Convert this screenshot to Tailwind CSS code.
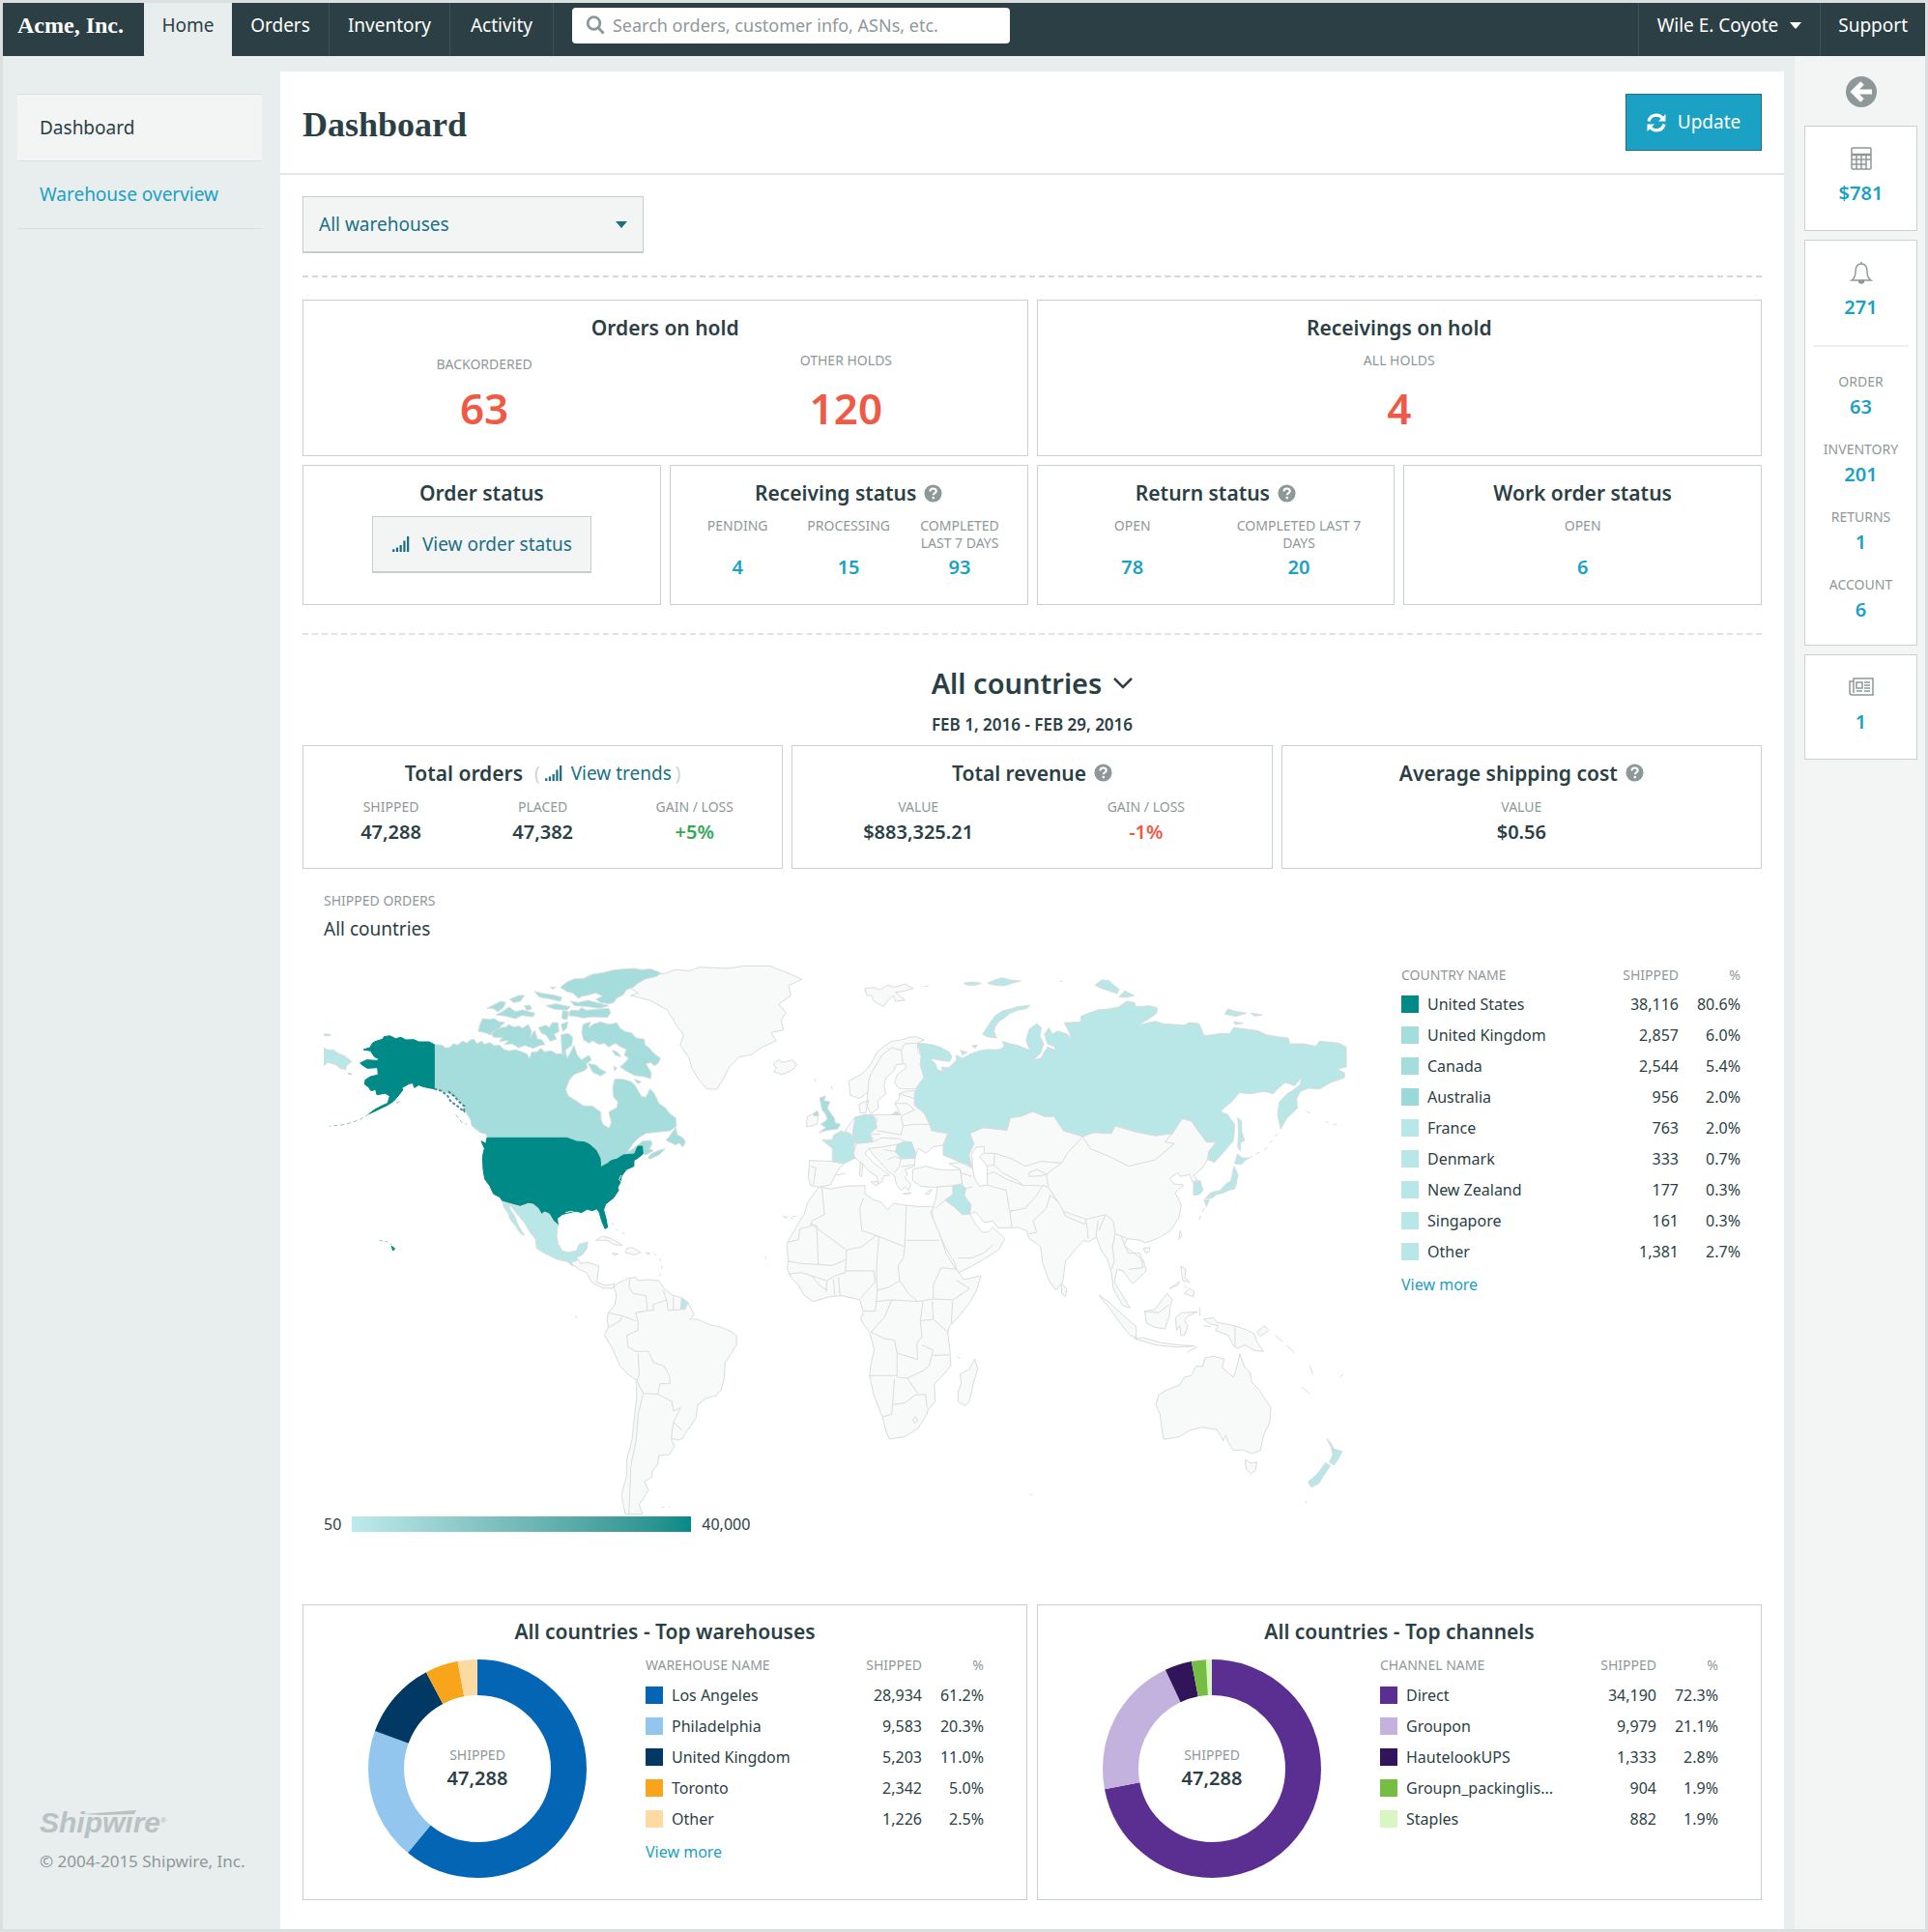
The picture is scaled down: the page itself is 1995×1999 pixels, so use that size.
<!DOCTYPE html>
<html lang="en">
<head>
    <meta charset="UTF-8">
    <meta name="viewport" content="width=device-width, initial-scale=1.0">
    <title>Dashboard - Acme, Inc.</title>
    <script src="https://cdn.jsdelivr.net/npm/@tailwindcss/browser@4"></script>
</head>
<body class="min-h-screen flex flex-col border-[3px] border-[#dcdfdf] bg-[#e8eded] font-['Noto_Sans','Open_Sans',sans-serif] text-[19px] text-[#2b3f45]">
    <!-- shared icons -->
    <svg class="hidden">
        <symbol id="help" viewBox="0 0 20 20">
            <circle cx="10" cy="10" r="9.5" fill="#8f9899"/>
            <path d="M6.8 7.8C6.8 5.8 8.2 4.7 10.1 4.7S13.4 5.8 13.4 7.5C13.4 9.7 10.3 9.7 10.3 11.9" fill="none" stroke="#fff" stroke-width="2.2"/>
            <circle cx="10.3" cy="14.8" r="1.4" fill="#fff"/>
        </symbol>
        <symbol id="bars" viewBox="0 0 20 18">
            <path d="M0 15h2.5v3H0zM4.2 13h2.5v5H4.2zM8.4 10h2.5v8H8.4zM12.6 5h2.5v13h-2.5zM16.8 0h2.5v18h-2.5z" fill="currentColor"/>
        </symbol>
    </svg>

    <header class="flex bg-[#2b3f45] text-white">
        <a href="#" class="flex items-center h-[55px] pb-[9px] pl-[15px] pr-[21px] font-['Liberation_Serif',serif] font-bold text-2xl">Acme, Inc.</a>
        <nav class="flex">
            <a href="#" class="flex items-center justify-center w-[91px] pb-[9px] bg-[#e8eded] text-[#2b3f45]">Home</a>
            <a href="#" class="flex items-center justify-center w-[101px] pb-[9px] border-r border-[#3d5157]">Orders</a>
            <a href="#" class="flex items-center justify-center w-[125px] pb-[9px] border-r border-[#3d5157]">Inventory</a>
            <a href="#" class="flex items-center justify-center w-[107px] pb-[9px] border-r border-[#3d5157]">Activity</a>
        </nav>
        <form class="flex items-center pb-[9px] ml-[19px]">
            <div class="flex items-center w-[453px] h-[37px] px-[14px] gap-2 rounded-sm bg-white">
                <svg class="w-5 h-5 shrink-0" viewBox="0 0 20 20" fill="none" stroke="#8f9899" stroke-width="2.8"><circle cx="8.5" cy="8" r="6.3"/><path d="M13 12.5l5.5 6"/></svg>
                <input type="text" aria-label="Search" placeholder="Search orders, customer info, ASNs, etc." class="flex-1 min-w-0 outline-none text-lg text-[#2b3f45] placeholder:text-[#8f9899]">
            </div>
        </form>
        <div class="flex ml-auto">
            <button class="flex items-center gap-3 px-[19px] pb-[9px] border-l border-[#3d5157]">Wile E. Coyote
                <svg class="w-3 h-2" viewBox="0 0 12 8"><path d="M0 1h12L7 7Q6 8 5 7z" fill="#fff"/></svg>
            </button>
            <a href="#" class="flex items-center px-[18px] pb-[9px] border-l border-[#3d5157]">Support</a>
        </div>
    </header>

    <div class="flex flex-1">
        <aside class="flex flex-col w-[287px] shrink-0 pt-[39px]">
            <nav class="ml-[15px] mr-[19px]">
                <a href="#" class="flex items-center h-[70px] pl-[23px] border-y border-[#dadfdf] bg-[#f3f5f4]">Dashboard</a>
                <a href="#" class="flex items-center h-[70px] pl-[23px] border-b border-[#dadfdf] text-[#1ba1c4]">Warehouse overview</a>
            </nav>
            <div class="mt-auto pl-[38px] pb-[58px]">
                <div class="relative flex w-fit font-['Liberation_Sans',sans-serif] text-[30px] leading-8 font-bold italic text-[#b9c2c2]">
                    Shipwire<span class="text-[8px] leading-7">®</span>
                    <svg class="absolute left-11 top-[3px] w-14 h-2" viewBox="0 0 56 8"><path d="M0 4L56 0L54 4L20 5z" fill="#b9c2c2"/></svg>
                </div>
                <p class="mt-3 text-[17px] leading-6 text-[#8f9899]">© 2004-2015 Shipwire, Inc.</p>
            </div>
        </aside>

        <main class="flex-1 min-w-0 mt-4 mr-[11px] bg-white">
            <div class="flex items-center justify-between h-[107px] px-[23px] border-b-2 border-[#e1e6e6]">
                <h1 class="pt-1 font-['Liberation_Serif',serif] font-bold text-4xl">Dashboard</h1>
                <button class="flex items-center justify-center gap-3 w-[141px] h-[59px] border border-[#1a6f87] bg-[#1ba1c4] text-white">
                    <svg class="w-5 h-5" viewBox="0 0 20 20" fill="none" stroke="#fff" stroke-width="3.2"><path d="M2 8.500C3 4.500 6 2.200 10 2.200c2.500 0 4.500 1 6 2.800M18 11.500c-1 4-4 6.300-8 6.300-2.500 0-4.500-1-6-2.800"/><path d="M19.500 1v7.500H12zM.5 19v-7.500H8z" fill="#fff" stroke="none"/></svg>
                    Update
                </button>
            </div>

            <div class="px-[23px] pt-[22px] pb-[29px]">
                <div class="relative w-[353px]">
                    <select aria-label="Warehouse" class="block appearance-none w-full h-[59px] pl-4 border border-[#c6cdcd] border-b-2 bg-[#f3f5f4] text-[#1a6f87]">
                        <option>All warehouses</option>
                    </select>
                    <svg class="absolute right-4 top-1/2 -mt-1 w-[14px] h-2 pointer-events-none" viewBox="0 0 14 8"><path d="M1 0h12L7 7z" fill="#1a6f87"/></svg>
                </div>

                <hr class="mt-[23px] border-t-2 border-dashed border-[#d3d8d8]">

                <section class="mt-[23px] grid grid-cols-2 gap-[9px] text-center">
                    <div class="min-h-[162px] pt-[14px] border border-[#c9d0d0]">
                        <h2 class="text-[21px] leading-7 font-semibold">Orders on hold</h2>
                        <div class="grid grid-cols-2 mt-[11px]">
                            <div class="pt-1">
                                <div class="text-sm leading-[18px] text-[#8f9899]">BACKORDERED</div>
                                <div class="mt-3 text-[44px] leading-[48px] font-semibold text-[#ee5a45]">63</div>
                            </div>
                            <div>
                                <div class="text-sm leading-[18px] text-[#8f9899]">OTHER HOLDS</div>
                                <div class="mt-4 text-[44px] leading-[48px] font-semibold text-[#ee5a45]">120</div>
                            </div>
                        </div>
                    </div>
                    <div class="min-h-[162px] pt-[14px] border border-[#c9d0d0]">
                        <h2 class="text-[21px] leading-7 font-semibold">Receivings on hold</h2>
                        <div class="mt-[11px] text-sm leading-[18px] text-[#8f9899]">ALL HOLDS</div>
                        <div class="mt-4 text-[44px] leading-[48px] font-semibold text-[#ee5a45]">4</div>
                    </div>
                </section>

                <section class="mt-[9px] grid grid-cols-4 gap-[9px] text-center">
                    <div class="min-h-[145px] pt-[14px] border border-[#c9d0d0]">
                        <h2 class="text-[21px] leading-7 font-semibold">Order status</h2>
                        <button class="inline-flex items-center justify-center gap-3 mt-[10px] w-[227px] h-[59px] border border-[#c6cdcd] border-b-2 bg-[#f3f5f4] text-[#1a6f87]">
                            <svg class="w-5 h-4"><use href="#bars"/></svg>View order status
                        </button>
                    </div>
                    <div class="min-h-[145px] pt-[14px] px-3 border border-[#c9d0d0]">
                        <h2 class="flex items-center justify-center gap-2 text-[21px] leading-7 font-semibold">Receiving status <svg class="w-[19px] h-[19px]"><use href="#help"/></svg></h2>
                        <div class="grid grid-cols-3 mt-[11px]">
                            <div><div class="h-9 text-sm leading-[18px] text-[#8f9899]">PENDING</div><a href="#" class="block mt-[2px] text-xl leading-7 font-semibold text-[#1ba1c4]">4</a></div>
                            <div><div class="h-9 text-sm leading-[18px] text-[#8f9899]">PROCESSING</div><a href="#" class="block mt-[2px] text-xl leading-7 font-semibold text-[#1ba1c4]">15</a></div>
                            <div><div class="h-9 text-sm leading-[18px] text-[#8f9899]">COMPLETED LAST 7 DAYS</div><a href="#" class="block mt-[2px] text-xl leading-7 font-semibold text-[#1ba1c4]">93</a></div>
                        </div>
                    </div>
                    <div class="min-h-[145px] pt-[14px] px-3 border border-[#c9d0d0]">
                        <h2 class="flex items-center justify-center gap-2 text-[21px] leading-7 font-semibold">Return status <svg class="w-[19px] h-[19px]"><use href="#help"/></svg></h2>
                        <div class="grid grid-cols-2 mt-[11px]">
                            <div><div class="h-9 text-sm leading-[18px] text-[#8f9899]">OPEN</div><a href="#" class="block mt-[2px] text-xl leading-7 font-semibold text-[#1ba1c4]">78</a></div>
                            <div><div class="h-9 px-4 text-sm leading-[18px] text-[#8f9899]">COMPLETED LAST 7 DAYS</div><a href="#" class="block mt-[2px] text-xl leading-7 font-semibold text-[#1ba1c4]">20</a></div>
                        </div>
                    </div>
                    <div class="min-h-[145px] pt-[14px] px-3 border border-[#c9d0d0]">
                        <h2 class="text-[21px] leading-7 font-semibold">Work order status</h2>
                        <div class="mt-[11px] h-9 text-sm leading-[18px] text-[#8f9899]">OPEN</div>
                        <a href="#" class="block mt-[2px] text-xl leading-7 font-semibold text-[#1ba1c4]">6</a>
                    </div>
                </section>

                <hr class="mt-[29px] border-t-2 border-dashed border-[#dfe3e3]">

                <div class="mt-8 text-center">
                    <button class="inline-flex items-center gap-3 text-[29px] leading-9 font-semibold">All countries
                        <svg class="w-5 h-3" viewBox="0 0 20 12" fill="none" stroke="#2b3f45" stroke-width="2.5"><path d="M1 1l9 9 9-9"/></svg>
                    </button>
                    <p class="mt-3 text-[17px] leading-6 font-semibold">FEB 1, 2016 - FEB 29, 2016</p>
                </div>

                <section class="mt-[9px] grid grid-cols-3 gap-[9px] text-center">
                    <div class="min-h-[128px] pt-[14px] px-3 border border-[#c9d0d0]">
                        <div class="flex items-center justify-center">
                            <h2 class="text-[21px] leading-7 font-semibold">Total orders</h2>
                            <span class="ml-3 leading-7 text-[#ccd3d3]">(</span>
                            <a href="#" class="flex items-center gap-2 mx-1 leading-7 text-[#1a6f87]"><svg class="w-5 h-4"><use href="#bars"/></svg>View trends</a>
                            <span class="leading-7 text-[#ccd3d3]">)</span>
                        </div>
                        <div class="grid grid-cols-3 mt-3">
                            <div><div class="text-sm leading-[18px] text-[#8f9899]">SHIPPED</div><div class="mt-[3px] text-xl leading-7 font-semibold">47,288</div></div>
                            <div><div class="text-sm leading-[18px] text-[#8f9899]">PLACED</div><div class="mt-[3px] text-xl leading-7 font-semibold">47,382</div></div>
                            <div><div class="text-sm leading-[18px] text-[#8f9899]">GAIN / LOSS</div><div class="mt-[3px] text-xl leading-7 font-semibold text-[#35a853]">+5%</div></div>
                        </div>
                    </div>
                    <div class="min-h-[128px] pt-[14px] px-3 border border-[#c9d0d0]">
                        <h2 class="flex items-center justify-center gap-2 text-[21px] leading-7 font-semibold">Total revenue <svg class="w-[19px] h-[19px]"><use href="#help"/></svg></h2>
                        <div class="grid grid-cols-2 mt-3">
                            <div><div class="text-sm leading-[18px] text-[#8f9899]">VALUE</div><div class="mt-[3px] text-xl leading-7 font-semibold">$883,325.21</div></div>
                            <div><div class="text-sm leading-[18px] text-[#8f9899]">GAIN / LOSS</div><div class="mt-[3px] text-xl leading-7 font-semibold text-[#ee5a45]">-1%</div></div>
                        </div>
                    </div>
                    <div class="min-h-[128px] pt-[14px] px-3 border border-[#c9d0d0]">
                        <h2 class="flex items-center justify-center gap-2 text-[21px] leading-7 font-semibold">Average shipping cost <svg class="w-[19px] h-[19px]"><use href="#help"/></svg></h2>
                        <div class="mt-3 text-sm leading-[18px] text-[#8f9899]">VALUE</div>
                        <div class="mt-[3px] text-xl leading-7 font-semibold">$0.56</div>
                    </div>
                </section>

                <section class="mt-6 px-[22px]">
                    <div class="text-sm leading-[18px] text-[#8f9899]">SHIPPED ORDERS</div>
                    <h3 class="mt-2 leading-6">All countries</h3>
                    <div class="flex items-start gap-14 mt-[22px]">
                        <svg class="flex-1 min-w-0 [&_path]:[vector-effect:non-scaling-stroke]" viewBox="335 995 1059 574" stroke-width="1" stroke-linejoin="round" stroke="#d9dcdc" fill="#f8f9f9">
                            <!-- Greenland -->
                            <path transform="scale(1.2748)" d="M508 800L514 796 522 795 530 791 540 790 548 787 560 788 568 785 590 786 604 784 625 784 640 790 651 795 640 800 642 808 632 815 638 822 634 828 636 836 626 838 630 845 618 850 610 856 600 858 592 866 588 874 582 884 574 884 567 876 562 868 559 858 552 848 555 840 549 832 542 820 528 812 512 808 518 806Z"/>

                            <!-- North America -->
                            <g transform="translate(320 980) scale(.3333)">
                                <g fill="#a5dcdc">
                                    <path d="M388 302L412 304 422 312 435 312 448 300 460 304 476 292 490 298 500 288 512 286 520 300 534 292 545 302 560 296 575 306 590 304 605 318 620 322 640 318 660 325 676 332 684 346 690 326 705 326 720 314 730 325 752 322 768 332 790 330 795 318 800 345 812 325 822 305 832 335 845 350 868 336 876 350 860 362 864 375 850 385 822 395 808 412 796 442 804 462 830 478 850 492 880 494 905 512 906 535 912 550 930 562 938 545 930 512 955 498 958 480 945 465 942 440 948 410 975 410 1000 418 1012 430 1030 462 1045 466 1058 440 1072 455 1085 485 1105 498 1118 516 1138 530 1140 556 1120 570 1080 574 1045 578 1025 590 1005 610 985 640 1010 622 1035 602 1060 600 1065 610 1056 626 1068 632 1045 645 1036 640 1030 618 1018 618 1020 640 975 648 938 665 905 683 903 655 890 630 870 610 855 605 830 603 800 592 552 592 548 580 530 575 505 555 500 535 488 515 478 490 455 468 436 455 410 446 388 440Z"/>
                                    <path d="M1108 600L1120 585 1138 560 1142 582 1160 592 1168 605 1160 620 1148 608 1138 614ZM1052 652L1065 640 1082 632 1105 626 1085 645 1058 658Z"/>
                                    <path d="M525 262L530 240 538 222 560 224 575 222 590 232 608 234 595 244 585 258 570 262 562 272 545 265Z"/>
                                    <path d="M565 268L590 250 612 248 618 240 635 248 650 245 662 252 680 240 690 262 686 280 700 258 708 285 722 288 732 302 715 305 695 314 670 305 650 312 630 300 605 302 620 290 590 292 600 280 572 280Z"/>
                                    <path d="M852 288L846 265 850 240 872 232 868 252 880 240 905 232 930 240 955 235 965 252 980 262 1000 266 1015 282 1040 286 1042 302 1060 318 1070 330 1090 345 1085 358 1072 368 1060 358 1045 362 1062 390 1060 408 1040 402 1010 398 985 385 965 372 980 358 992 345 978 335 985 318 965 308 950 298 930 310 915 298 900 302 880 290 868 298Z"/>
                                    <path d="M780 125L800 108 825 98 850 98 880 84 910 80 940 72 975 68 1010 66 1030 70 1060 68 1092 80 1075 92 1045 98 1020 112 1005 125 985 132 975 148 955 158 945 172 930 176 905 172 890 162 910 152 890 142 870 148 850 152 835 158 818 142 800 138Z"/>
                                    <path d="M805 212L812 195 835 198 845 188 860 196 930 190 935 205 925 218 880 216 850 220 830 215ZM810 168L835 172 865 165 930 182 900 190 860 184 825 182Z"/>
                                    <path d="M552 190L575 178 595 168 610 172 602 188 585 200 570 190ZM580 210L600 200 620 186 640 200 662 195 700 205 695 216 660 212 640 222 610 214ZM622 162L650 150 668 150 655 168 635 172ZM700 138L730 145 755 148 785 156 778 168 745 160 715 155ZM735 182L765 176 810 185 800 196 760 192ZM786 198L805 200 800 225 785 222ZM668 182L685 180 690 192 675 196ZM750 124L765 125 755 130Z"/>
                                    <path d="M712 250L735 242 745 250 755 234 772 235 775 262 760 270 768 285 748 292 735 272 722 268ZM782 240L802 232 800 250 788 262ZM782 272L805 268 818 280 815 305 800 315 785 335ZM866 362L890 366 902 378 922 388 905 400 880 388ZM940 320L955 325 968 340 950 335ZM1010 410L1030 418 1020 424ZM945 370L955 375 948 384Z"/>
                                </g>
                                <path fill="#008a87" stroke="#008a87" d="M168 318L188 312 198 296 212 290 228 286 232 278 250 275 268 284 285 280 300 288 325 287 340 294 372 294 388 302 388 440 365 436 350 432 340 428 326 436 322 422 310 424 300 430 288 436 290 444 276 462 262 478 244 490 215 504 185 518 200 506 222 494 244 484 250 462 236 454 210 458 206 442 192 446 184 434 172 426 174 412 190 402 214 396 212 374 180 376 168 368 158 360 178 350 210 352 218 348 202 340 190 322Z"/>
                                <path fill="none" stroke="#3d8f93" stroke-dasharray="3 2" stroke-width="2" d="M388 440L410 446 430 462 440 480 456 490 470 502 484 512M432 448L450 462 465 480 482 494 480 512"/>
                                <path fill="none" stroke="#8fc2c2" stroke-dasharray="4 3" d="M185 518L160 534 130 545 100 552 62 556M270 484L288 476M455 520L475 545 490 550M120 392L140 396"/>
                                <path fill="#008a87" stroke="#008a87" d="M552 592L800 592 830 603 855 605 870 612 890 630 903 655 905 683 925 672 938 662 955 658 975 645 1010 642 1020 618 1034 618 1036 642 1020 655 1008 662 1008 680 985 690 970 710 966 730 958 745 960 755 945 778 920 798 914 815 922 845 926 870 918 874 908 850 900 822 892 812 880 818 862 814 845 824 830 820 800 826 785 830 770 842 772 862 758 850 745 828 730 822 722 830 710 810 695 798 680 796 655 805 600 788 592 776 572 766 560 740 545 720 540 690 538 650 544 625 534 602 548 610ZM255 928L266 936 260 942Z"/>
                                <path fill="none" stroke="#f8f9f9" d="M968 708L962 722 970 730M796 824L812 820 832 826"/>
                                <path fill="none" stroke="#8fc2c2" stroke-dasharray="3 3" d="M218 910L240 914 256 924"/>
                                <path fill="#b9e6e6" d="M600 790L655 805 680 796 695 798 710 810 722 830 730 822 745 828 758 850 772 862 768 895 772 920 785 942 805 948 830 942 838 922 865 915 862 935 848 955 832 962 832 975 818 990 800 976 770 970 730 950 706 935 702 905 685 885 668 855 645 828 622 798 622 812 638 835 648 862 668 895 655 888 640 865 622 842 618 826 604 808ZM45 312L60 320 75 318 90 330 110 338 132 355 118 366 112 380 95 376 85 366 58 358 45 368ZM45 270L65 270 65 275 45 275Z"/>
                            </g>

                            <!-- Europe and Asia -->
                            <g transform="matrix(.3954 0 0 .3333 800 980)">
                                <path d="M0 362L15 350 25 358 50 350 62 366 50 382 25 395 2 388 8 376ZM240 128L265 125 280 132 300 118 318 124 345 115 367 128 345 136 320 140 330 150 345 165 320 168 315 150 300 165 290 185 278 178 262 165 258 150 245 150Z"/>
                                <path d="M198 415L230 395 250 372 262 350 272 325 290 308 310 292 335 288 355 280 375 278 395 288 378 298 378 320 388 340 385 365 395 405 375 440 330 440 318 420 325 395 348 375 345 362 322 365 315 385 295 405 290 430 295 455 275 475 275 500 255 517 245 490 248 450 225 470 202 460ZM225 488L250 475 242 515 228 515ZM88 540L90 525 104 518 118 528 115 550 88 558Z"/>
                                <path fill="none" d="M248 450L250 410 262 380 285 335 310 312 335 320 345 300 378 298M335 320L340 362"/>
                                <path d="M318 485L330 470 330 455 345 448 370 445 370 490 395 515 410 550 415 570 458 578 445 615 418 620 400 640 380 625 372 650 370 680 345 690 352 705 345 715 360 735 355 755 345 745 335 755 322 735 318 710 300 695 280 668 262 645 250 625 240 640 262 668 285 690 305 708 290 710 285 728 275 735 272 712 250 695 232 670 215 655 210 640 218 610 208 585 188 570 200 550 212 530 240 520 310 520 333 520 325 500Z"/>
                                <path fill="none" d="M272 530L268 560M335 525L340 555 335 582 300 575 272 570M318 485L350 485 370 505 335 525M340 555L370 550 410 550M260 605L285 592 330 595 345 603M262 600L255 580 280 580M250 625L290 620 325 612M320 635L290 628M300 660L318 650 335 657 330 680 318 700M335 682L370 675M330 455L370 470M188 570L208 585"/>
                                <path d="M95 662L155 665 185 672 168 695 160 715 150 738 120 745 98 740 92 715ZM228 668L234 675 232 712 226 708ZM255 728L276 728 270 742ZM340 765L362 762 350 768ZM398 768L405 758 416 752 410 765Z"/>
                                <path fill="none" d="M98 680L112 685 105 738M165 708L190 702"/>
                                <path d="M365 690L400 680 430 690 465 692 490 690 495 735 470 742 430 745 410 745 385 742 365 725Z"/>
                                <path d="M515 578L550 560 612 568 620 530 680 510 710 525 735 525 760 570 810 588 840 575 885 578 895 555 945 572 1000 585 1045 578 1070 532 1095 540 1115 575 1135 605 1160 605 1140 635 1136 662 1120 690 1100 708 1110 722 1098 730 1090 706 1065 712 1060 700 1038 718 1048 735 1074 738 1052 762 1068 800 1062 840 1040 880 1010 902 975 918 960 910 927 905 918 925 945 950 968 970 977 1005 941 1045 930 1028 915 1005 900 1000 893 1040 914 1080 934 1120 914 1112 890 1060 885 1010 875 970 860 945 846 900 825 915 812 910 790 940 765 975 758 1040 740 1065 722 1035 705 980 700 930 690 920 670 905 663 880 640 870 588 872 575 850 552 855 530 822 515 828 530 860 548 885 562 885 575 870 607 905 590 940 550 970 520 990 483 1012 475 980 450 930 420 850 415 815 425 785 430 745 470 740 495 735 490 690 460 672 490 668 520 685 512 645 525 610Z"/>
                                <path fill="#fff" d="M520 640L530 622 552 618 552 640 540 650 560 680 560 710 560 738 540 742 528 720 522 690Z"/>
                                <path fill="none" d="M552 640L580 640 578 675 560 680M580 640L620 655 660 680 700 665 755 670 770 640 810 588M578 675L600 700 640 725 655 740 700 740M755 670L715 705 720 745M560 705L578 698 610 720 655 740M670 712L700 710 715 705 690 690 670 700ZM560 738L610 755 620 825 625 870M500 750L520 745M810 588L830 625 880 650 930 680 1000 660 1050 610 1025 605 1045 578M620 820L660 810 690 770 705 740 720 745 745 790 760 820 820 845 870 830 890 850 895 890 927 905M745 790L725 770 715 810 680 850 690 885 670 890M760 820L765 835 815 860 820 845M820 855L825 905M850 850L845 900M870 830L852 880M895 890L888 930 893 975 885 1000M910 898L930 950 960 950 968 995 930 1000M515 828L500 830 450 785 425 810M483 965L520 965 550 950 575 925M490 700L520 712"/>
                                <g fill="#b9e6e6">
                                    <path d="M378 298L400 300 420 304 440 312 460 325 468 340 462 355 440 352 410 345 425 362 430 380 445 386 440 372 460 374 480 350 478 335 495 345 520 330 540 322 560 318 590 318 605 310 600 292 620 300 640 305 672 320 662 290 670 255 690 238 702 250 698 275 708 300 700 330 680 350 700 345 718 310 740 320 735 308 718 300 710 270 722 250 730 270 745 260 770 270 782 290 775 265 762 235 805 232 805 215 825 205 850 195 880 192 905 185 925 168 945 172 950 185 985 182 1005 188 1004 205 980 225 955 242 1000 230 1020 238 1050 240 1075 242 1090 234 1115 238 1128 275 1150 272 1170 268 1195 268 1205 250 1240 255 1270 260 1290 272 1320 278 1348 282 1352 300 1390 300 1420 308 1430 292 1480 298 1500 310 1500 372 1475 378 1495 390 1495 405 1460 420 1430 440 1400 438 1380 448 1370 470 1372 500 1345 530 1328 565 1320 520 1325 480 1345 455 1360 445 1380 425 1382 405 1365 430 1340 420 1320 440 1308 455 1285 448 1250 455 1220 452 1200 480 1170 510 1190 520 1195 530 1208 550 1205 600 1180 635 1155 668 1138 660 1140 635 1160 605 1135 605 1115 575 1095 540 1070 532 1055 560 1045 578 1000 585 945 572 920 562 895 555 885 578 840 575 810 588 780 575 760 570 735 525 710 525 680 510 650 525 620 530 612 568 550 560 515 578 525 610 512 645 520 685 505 672 490 668 445 645 445 615 458 578 415 570 410 550 395 515 370 490 370 455 378 430 395 405 385 365 388 340Z"/>
                                    <path d="M548 270L562 245 570 230 582 212 600 198 620 192 640 185 672 180 665 190 640 196 620 205 605 220 590 232 580 250 578 262 585 282 560 278ZM498 112L520 108 545 112 530 118 510 118ZM560 112L580 102 600 95 620 102 648 105 625 112 605 120 580 118ZM842 118L860 102 880 104 888 115 905 130 900 145 880 136 860 128ZM905 155L920 136 945 150 925 156ZM1182 208L1190 192 1205 198 1238 205 1210 215ZM1250 205L1280 210 1260 214ZM1205 232L1230 236 1210 240ZM490 320L508 326 496 335ZM520 306L535 304 528 314Z"/>
                                    <path d="M1216 530L1226 540 1226 570 1234 600 1224 605 1222 632 1216 620 1218 580ZM310 520L322 510 333 520ZM1215 642L1228 654 1245 655 1235 662 1225 675 1208 672ZM1206 680L1216 705 1212 735 1208 750 1190 756 1180 762 1160 768 1150 778 1130 780 1145 762 1170 755 1180 740 1198 725ZM1128 785L1142 782 1134 806ZM1100 728L1118 725 1125 755 1115 768 1100 770Z"/>
                                    <path d="M470 740L495 738 505 750 500 770 518 800 515 828 495 830 470 802 450 785 470 768ZM128 598L155 598 158 584 178 570 198 580 215 588 210 640 215 655 185 672 155 665 155 625 140 610ZM215 528L240 520 265 525 272 560 252 580 260 605 218 610 208 585 210 560ZM325 612L345 603 362 605 372 635 372 655 335 657 320 635Z"/>
                                </g>
                                <path fill="#a5dcdc" d="M122 468L138 462 132 476 148 480 142 500 152 518 160 530 162 545 176 550 168 565 145 568 120 575 138 560 125 550 142 535 138 520 128 505ZM104 518L115 508 120 522 108 524Z"/>
                                <path fill="none" stroke-dasharray="4 5" d="M1245 655L1290 625 1325 570M1395 510L1410 518M1445 540L1455 548 1490 555M1128 810L1110 860M28 840L60 835M108 408L112 418M152 432L155 442M396 122L410 120M750 105L758 107"/>
                            </g>

                            <!-- South America, Africa, Oceania -->
                            <g transform="matrix(.5357 0 0 .3333 580 1250)">
                                <path d="M145 215L150 225 172 222 190 225 200 250 215 270 234 278 246 292 258 330 250 345 265 345 288 362 310 370 328 382 340 395 340 425 328 455 318 480 316 530 310 565 300 582 282 590 265 610 262 650 250 680 240 700 236 715 228 720 214 715 220 740 210 765 190 768 188 795 178 815 176 835 162 850 170 875 160 900 152 920 158 950 125 950 118 890 128 830 128 780 138 720 142 660 147 590 147 535 130 515 115 490 100 435 85 395 92 370 90 345 92 325 105 300 108 270 103 245 112 232 130 218Z"/>
                                <path fill="none" d="M135 215L132 245 140 265 165 272 168 318 145 325 150 355 150 380 128 395 130 430 145 445 170 445 180 480 200 490 210 520 212 545 192 545 188 578 215 600 218 630 232 620 218 665 235 690M168 318L180 318 178 300 205 285 198 255M205 285L208 318 234 315M218 275L218 318M150 450L152 520 147 535 160 575 188 578M160 575L150 640 146 720 136 800 132 950M92 372L115 350 120 335 92 325M120 335L145 350M218 665L214 715"/>
                                <path fill="#b9e6e6" d="M234 278L246 294 240 315 232 312Z"/>
                                <path d="M20 170L35 160 38 172 50 168 74 180 70 230 85 240 105 235 100 250 80 248 60 230 50 200 35 190ZM68 100L80 88 95 92 120 115 104 114 90 100ZM128 125L138 122 155 138 142 145 125 138ZM100 140L112 142 104 146ZM165 138L173 140 168 144Z"/>
                                <path fill="none" stroke-dasharray="3 5" d="M180 142L192 155 196 185 190 220M98 45L110 70 124 80M28 335L38 345M395 150L402 175M430 25L455 35M195 928L212 928M908 885L914 900"/>
                                <path d="M499 -65L521 -60 550 -68 588 -70 588 -45 605 -25 618 -20 632 5 643 -15 660 -10 690 -5 721 -5 715 15 732 80 745 140 762 185 772 205 778 222 812 210 805 250 792 290 770 335 752 365 748 385 752 440 754 490 735 525 722 545 724 600 710 625 708 640 690 685 665 710 635 717 628 690 622 650 605 580 597 520 600 480 606 440 597 385 585 360 580 345 585 320 578 285 545 272 520 275 488 290 470 270 460 240 445 215 438 190 440 165 437 110 455 60 470 20 478 -20Z"/>
                                <path fill="none" d="M440 105L460 98 462 65 485 55 485 40 510 20 505 -60M485 50L552 130 582 120 610 85 582 70 578 0 585 -30M482 50L495 55 498 175 465 172 440 165M498 175L525 178 552 160 552 130M610 85L665 120 668 -8M668 100L732 100M665 120L662 155 652 180 655 225 635 245 612 255 610 205 612 150 615 88M550 195L605 195 608 230 590 260 580 280M552 160L550 200 530 210 515 225 513 262M655 225L672 265 690 290 720 282 720 240 735 185 765 190M720 282L758 285 790 250 765 225M612 255L610 290 640 285 690 290M610 290L608 320 585 320M640 285L625 340 600 385 625 405 645 410 650 450 690 470 688 420 698 400 695 350 700 290M695 350L720 345 748 385M720 345L718 290M755 360L757 290M650 450L650 520 597 520M650 525L670 528 700 505 712 490 720 440 698 425M720 458L752 455M645 530L640 640 622 648M640 610L665 605 685 580 705 578 708 620M670 528L690 575M485 210L500 240 515 255M465 200L485 210 513 225M440 205L465 200M537 215L540 272M527 220L530 272M680 655L686 648 690 660 684 668Z"/>
                                <path d="M800 468L806 500 798 540 790 600 782 613 768 602 768 570 774 545 772 515 790 500ZM968 235L978 250 975 275 968 265ZM1126 125L1138 122 1138 135 1130 140ZM1197 70L1200 85 1194 98Z"/>
                                <path d="M1155 580L1170 565 1195 550 1205 525 1218 520 1228 490 1240 492 1245 465 1262 460 1282 468 1278 495 1290 512 1300 525 1306 495 1312 452 1322 495 1332 510 1335 540 1350 565 1360 590 1372 620 1370 665 1358 705 1352 752 1335 762 1318 750 1300 752 1290 728 1285 705 1280 722 1268 688 1240 680 1215 690 1195 710 1165 718 1162 690 1158 640 1150 610ZM1322 780L1334 792 1345 788 1342 815 1334 825 1325 812Z"/>
                                <path d="M1242 345L1262 340 1268 355 1280 358 1302 365 1325 378 1340 390 1345 415 1358 445 1340 442 1322 425 1308 435 1300 428 1290 395 1265 380 1270 365 1255 360ZM1128 320L1148 315 1162 285 1172 265 1182 285 1178 300 1176 335 1168 375 1148 370 1132 358ZM1040 270L1058 290 1085 330 1112 368 1112 402 1100 395 1080 355 1060 310ZM1108 405L1125 402 1160 418 1195 425 1225 428 1190 432 1150 425ZM1188 340L1200 325 1230 322 1212 335 1205 350 1212 365 1205 395 1198 395 1196 365 1190 380ZM1198 180L1208 190 1206 215 1215 230 1202 225ZM1205 265L1215 250 1224 258 1222 275ZM1176 250L1196 228 1192 240ZM1345 385L1360 365 1368 380 1352 398Z"/>
                                <path fill="none" d="M1303 365V432M1128 320L1155 325 1175 300M1205 240L1210 250M1235 310V335M1242 365L1256 368M1230 430L1210 448M1380 395L1395 415M1402 425L1418 450M1447 488L1453 515M1432 555L1448 578M1505 525L1512 515M1440 910V916M765 460L772 466"/>
                                <path fill="#b9e6e6" d="M1480 715L1486 725 1494 748 1510 755 1502 780 1494 798 1485 788 1492 765 1488 740ZM1478 790L1487 800 1475 828 1465 855 1450 866 1444 850 1462 825Z"/>
                            </g>
                        </svg>
                        <div class="w-[351px] shrink-0 text-base">
                            <table class="w-full">
                                <thead class="text-sm text-[#8f9899]">
                                    <tr class="h-7"><th class="text-left font-normal">COUNTRY NAME</th><th class="text-right font-normal">SHIPPED</th><th class="w-16 text-right font-normal">%</th></tr>
                                </thead>
                                <tbody>
                                    <tr class="h-8"><td><div class="flex items-center gap-[9px]"><span class="w-[18px] h-[18px] bg-[#008a87]"></span>United States</div></td><td class="text-right">38,116</td><td class="text-right">80.6%</td></tr>
                                    <tr class="h-8"><td><div class="flex items-center gap-[9px]"><span class="w-[18px] h-[18px] bg-[#a5dcdc]"></span>United Kingdom</div></td><td class="text-right">2,857</td><td class="text-right">6.0%</td></tr>
                                    <tr class="h-8"><td><div class="flex items-center gap-[9px]"><span class="w-[18px] h-[18px] bg-[#a5dcdc]"></span>Canada</div></td><td class="text-right">2,544</td><td class="text-right">5.4%</td></tr>
                                    <tr class="h-8"><td><div class="flex items-center gap-[9px]"><span class="w-[18px] h-[18px] bg-[#9bd9d8]"></span>Australia</div></td><td class="text-right">956</td><td class="text-right">2.0%</td></tr>
                                    <tr class="h-8"><td><div class="flex items-center gap-[9px]"><span class="w-[18px] h-[18px] bg-[#b9e6e6]"></span>France</div></td><td class="text-right">763</td><td class="text-right">2.0%</td></tr>
                                    <tr class="h-8"><td><div class="flex items-center gap-[9px]"><span class="w-[18px] h-[18px] bg-[#b9e6e6]"></span>Denmark</div></td><td class="text-right">333</td><td class="text-right">0.7%</td></tr>
                                    <tr class="h-8"><td><div class="flex items-center gap-[9px]"><span class="w-[18px] h-[18px] bg-[#b9e6e6]"></span>New Zealand</div></td><td class="text-right">177</td><td class="text-right">0.3%</td></tr>
                                    <tr class="h-8"><td><div class="flex items-center gap-[9px]"><span class="w-[18px] h-[18px] bg-[#b9e6e6]"></span>Singapore</div></td><td class="text-right">161</td><td class="text-right">0.3%</td></tr>
                                    <tr class="h-8"><td><div class="flex items-center gap-[9px]"><span class="w-[18px] h-[18px] bg-[#b9e6e6]"></span>Other</div></td><td class="text-right">1,381</td><td class="text-right">2.7%</td></tr>
                                </tbody>
                            </table>
                            <a href="#" class="block mt-[6px] text-[#1ba1c4]">View more</a>
                        </div>
                    </div>
                    <div class="flex items-center gap-[11px] text-base leading-4">
                        50
                        <span class="w-[351px] h-4 bg-linear-to-r from-[#bdeaea] to-[#008a87]"></span>
                        40,000
                    </div>
                </section>

                <section class="mt-[75px] grid grid-cols-2 gap-[10px]">
                    <div class="min-h-[306px] pt-[13px] border border-[#c9d0d0]">
                        <h2 class="text-center text-[21px] leading-7 font-semibold">All countries - Top warehouses</h2>
                        <div class="flex items-start gap-[61px] mt-[6px] pl-[67px] pr-11">
                            <div class="relative mt-[9px] shrink-0">
                                <svg class="w-[226px] h-[226px] -rotate-90" viewBox="0 0 226 226" fill="none" stroke-width="37">
                                    <circle cx="113" cy="113" r="94.5" pathLength="100" stroke="#0565b5" stroke-dasharray="61 100"/>
                                    <circle cx="113" cy="113" r="94.5" pathLength="100" stroke="#93c6ef" stroke-dasharray="19.6 100" stroke-dashoffset="-61"/>
                                    <circle cx="113" cy="113" r="94.5" pathLength="100" stroke="#013864" stroke-dasharray="11.6 100" stroke-dashoffset="-80.6"/>
                                    <circle cx="113" cy="113" r="94.5" pathLength="100" stroke="#f9a51b" stroke-dasharray="4.9 100" stroke-dashoffset="-92.2"/>
                                    <circle cx="113" cy="113" r="94.5" pathLength="100" stroke="#fedaa3" stroke-dasharray="2.9 100" stroke-dashoffset="-97.1"/>
                                </svg>
                                <div class="absolute inset-0 flex flex-col items-center justify-center">
                                    <span class="text-sm leading-5 text-[#8f9899]">SHIPPED</span>
                                    <span class="text-xl leading-7 font-semibold">47,288</span>
                                </div>
                            </div>
                            <div class="flex-1 text-base">
                                <table class="w-full">
                                    <thead class="text-sm text-[#8f9899]">
                                        <tr class="h-[30px]"><th class="text-left font-normal">WAREHOUSE NAME</th><th class="text-right font-normal">SHIPPED</th><th class="w-16 text-right font-normal">%</th></tr>
                                    </thead>
                                    <tbody>
                                        <tr class="h-8"><td><div class="flex items-center gap-[9px]"><span class="w-[18px] h-[18px] bg-[#0565b5]"></span>Los Angeles</div></td><td class="text-right">28,934</td><td class="text-right">61.2%</td></tr>
                                        <tr class="h-8"><td><div class="flex items-center gap-[9px]"><span class="w-[18px] h-[18px] bg-[#93c6ef]"></span>Philadelphia</div></td><td class="text-right">9,583</td><td class="text-right">20.3%</td></tr>
                                        <tr class="h-8"><td><div class="flex items-center gap-[9px]"><span class="w-[18px] h-[18px] bg-[#013864]"></span>United Kingdom</div></td><td class="text-right">5,203</td><td class="text-right">11.0%</td></tr>
                                        <tr class="h-8"><td><div class="flex items-center gap-[9px]"><span class="w-[18px] h-[18px] bg-[#f9a51b]"></span>Toronto</div></td><td class="text-right">2,342</td><td class="text-right">5.0%</td></tr>
                                        <tr class="h-8"><td><div class="flex items-center gap-[9px]"><span class="w-[18px] h-[18px] bg-[#fedaa3]"></span>Other</div></td><td class="text-right">1,226</td><td class="text-right">2.5%</td></tr>
                                    </tbody>
                                </table>
                                <a href="#" class="block mt-[6px] text-[#1ba1c4]">View more</a>
                            </div>
                        </div>
                    </div>
                    <div class="min-h-[306px] pt-[13px] border border-[#c9d0d0]">
                        <h2 class="text-center text-[21px] leading-7 font-semibold">All countries - Top channels</h2>
                        <div class="flex items-start gap-[61px] mt-[6px] pl-[67px] pr-11">
                            <div class="relative mt-[9px] shrink-0">
                                <svg class="w-[226px] h-[226px] -rotate-90" viewBox="0 0 226 226" fill="none" stroke-width="37">
                                    <circle cx="113" cy="113" r="94.5" pathLength="100" stroke="#5b2f91" stroke-dasharray="72 100"/>
                                    <circle cx="113" cy="113" r="94.5" pathLength="100" stroke="#c3b1de" stroke-dasharray="21.1 100" stroke-dashoffset="-72"/>
                                    <circle cx="113" cy="113" r="94.5" pathLength="100" stroke="#311459" stroke-dasharray="4 100" stroke-dashoffset="-93"/>
                                    <circle cx="113" cy="113" r="94.5" pathLength="100" stroke="#75bd43" stroke-dasharray="2.2 100" stroke-dashoffset="-97"/>
                                    <circle cx="113" cy="113" r="94.5" pathLength="100" stroke="#d8f6c2" stroke-dasharray=".9 100" stroke-dashoffset="-99.1"/>
                                </svg>
                                <div class="absolute inset-0 flex flex-col items-center justify-center">
                                    <span class="text-sm leading-5 text-[#8f9899]">SHIPPED</span>
                                    <span class="text-xl leading-7 font-semibold">47,288</span>
                                </div>
                            </div>
                            <div class="flex-1 text-base">
                                <table class="w-full">
                                    <thead class="text-sm text-[#8f9899]">
                                        <tr class="h-[30px]"><th class="text-left font-normal">CHANNEL NAME</th><th class="text-right font-normal">SHIPPED</th><th class="w-16 text-right font-normal">%</th></tr>
                                    </thead>
                                    <tbody>
                                        <tr class="h-8"><td><div class="flex items-center gap-[9px]"><span class="w-[18px] h-[18px] bg-[#5b2f91]"></span>Direct</div></td><td class="text-right">34,190</td><td class="text-right">72.3%</td></tr>
                                        <tr class="h-8"><td><div class="flex items-center gap-[9px]"><span class="w-[18px] h-[18px] bg-[#c3b1de]"></span>Groupon</div></td><td class="text-right">9,979</td><td class="text-right">21.1%</td></tr>
                                        <tr class="h-8"><td><div class="flex items-center gap-[9px]"><span class="w-[18px] h-[18px] bg-[#311459]"></span>HautelookUPS</div></td><td class="text-right">1,333</td><td class="text-right">2.8%</td></tr>
                                        <tr class="h-8"><td><div class="flex items-center gap-[9px]"><span class="w-[18px] h-[18px] bg-[#75bd43]"></span>Groupn_packinglis...</div></td><td class="text-right">904</td><td class="text-right">1.9%</td></tr>
                                        <tr class="h-8"><td><div class="flex items-center gap-[9px]"><span class="w-[18px] h-[18px] bg-[#d8f6c2]"></span>Staples</div></td><td class="text-right">882</td><td class="text-right">1.9%</td></tr>
                                    </tbody>
                                </table>
                            </div>
                        </div>
                    </div>
                </section>
            </div>
        </main>

        <aside class="w-[135px] shrink-0 pl-[10px] pr-2 pt-[21px] bg-[#f3f5f4] text-center">
            <button class="block mx-auto" aria-label="Collapse">
                <svg class="w-8 h-8" viewBox="0 0 32 32"><circle cx="16" cy="16" r="16" fill="#8f9899"/><path d="M17 7L8 16l9 9M9 16h18" fill="none" stroke="#fff" stroke-width="5"/></svg>
            </button>
            <div class="mt-[19px] pt-[19px] pb-6 border border-[#c9d0d0] bg-white">
                <div class="flex justify-center items-center h-7">
                    <svg class="w-6 h-6" viewBox="0 0 24 24" fill="none" stroke="#8f9899" stroke-width="1.5"><rect x="2" y="1" width="20" height="22" rx="1"/><path d="M2 7.500h20M2 8.500h20M2 13h20M2 18h15M7 8v15M12 8v15M17 8v15"/></svg>
                </div>
                <a href="#" class="block mt-2 text-xl leading-7 font-semibold text-[#1ba1c4]">$781</a>
            </div>
            <div class="mt-[9px] pt-[19px] pb-[22px] border border-[#c9d0d0] bg-white">
                <div class="flex justify-center items-center h-7">
                    <svg class="w-6 h-6" viewBox="0 0 24 24" fill="none" stroke="#8f9899" stroke-width="1.5"><path d="M12 1v2M2 20c3-2 4-4 4-9 0-5 2-8 6-8s6 3 6 8c0 5 1 7 4 9z"/><path d="M9.500 20.500a2.500 2.500 0 005 0z" fill="#8f9899"/></svg>
                </div>
                <a href="#" class="block mt-2 text-xl leading-7 font-semibold text-[#1ba1c4]">271</a>
                <hr class="mx-2 mt-[25px] border-t-2 border-[#eef1f1]">
                <div class="mt-[27px] text-sm leading-[18px] text-[#8f9899]">ORDER</div>
                <a href="#" class="block mt-[3px] text-xl leading-7 font-semibold text-[#1ba1c4]">63</a>
                <div class="mt-[21px] text-sm leading-[18px] text-[#8f9899]">INVENTORY</div>
                <a href="#" class="block mt-[3px] text-xl leading-7 font-semibold text-[#1ba1c4]">201</a>
                <div class="mt-[21px] text-sm leading-[18px] text-[#8f9899]">RETURNS</div>
                <a href="#" class="block mt-[3px] text-xl leading-7 font-semibold text-[#1ba1c4]">1</a>
                <div class="mt-[21px] text-sm leading-[18px] text-[#8f9899]">ACCOUNT</div>
                <a href="#" class="block mt-[3px] text-xl leading-7 font-semibold text-[#1ba1c4]">6</a>
            </div>
            <div class="mt-[9px] pt-[19px] pb-6 border border-[#c9d0d0] bg-white">
                <div class="flex justify-center items-center h-7">
                    <svg class="w-[26px] h-5" viewBox="0 0 26 20" fill="none" stroke="#8f9899" stroke-width="1.5"><path d="M5 1h20v17H3.500Q1 18 1 15.500V4h4zM5 4v12M8 5h6v6H8zM16 5h6M16 8h6M16 11h6M8 14h6M16 14h6"/></svg>
                </div>
                <a href="#" class="block mt-2 text-xl leading-7 font-semibold text-[#1ba1c4]">1</a>
            </div>
        </aside>
    </div>
</body>
</html>
